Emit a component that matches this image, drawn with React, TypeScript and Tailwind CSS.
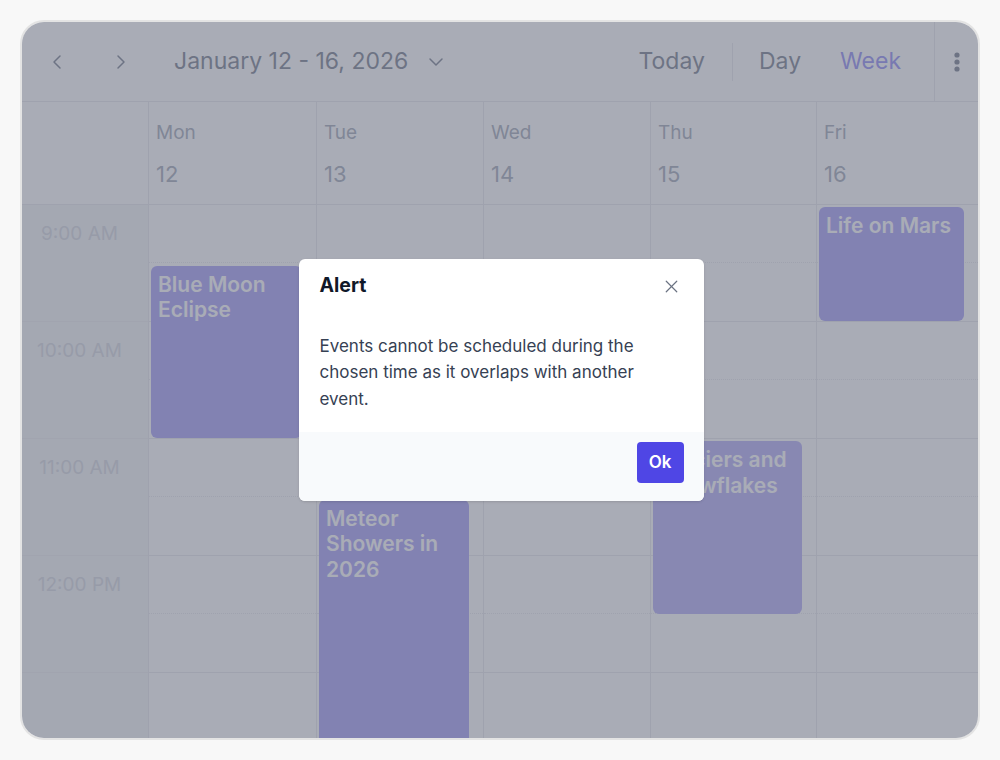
import React from 'react'
import { ChevronLeft, ChevronRight, ChevronDown, X } from 'lucide-react'

// one hour in the grid is 117px tall, the first visible hour is 9:00
const HOUR = 117
const START = 9

interface CalEvent {
  day: number
  title: string
  start: number
  end: number
  color: string
}

const days = [
  { name: 'Mon', date: 12 },
  { name: 'Tue', date: 13 },
  { name: 'Wed', date: 14 },
  { name: 'Thu', date: 15 },
  { name: 'Fri', date: 16 },
]

const hours = ['9:00 AM', '10:00 AM', '11:00 AM', '12:00 PM']

const events: CalEvent[] = [
  { day: 0, title: 'Blue Moon Eclipse', start: 9.5, end: 11, color: 'bg-[#9d96f6]' },
  { day: 1, title: 'Meteor Showers in 2026', start: 11.5, end: 14, color: 'bg-[#9d96f6]' },
  { day: 3, title: 'Glaciers and Snowflakes', start: 11, end: 12.5, color: 'bg-[#aca6f6]' },
  { day: 4, title: 'Life on Mars', start: 9, end: 10, color: 'bg-[#9d96f6]' },
]

const cols = 'grid grid-cols-[126px_168px_167px_167px_166px_minmax(0,1fr)]'

function Toolbar() {
  return (
    <div className="h-20 shrink-0 flex items-stretch border-b border-gray-200">
      <div className="flex items-center flex-1 pl-[15px]">
        <button className="w-10 h-10 flex items-center justify-center text-gray-500">
          <ChevronLeft size={24} strokeWidth={1.5} />
        </button>
        <button className="w-10 h-10 ml-6 flex items-center justify-center text-gray-500">
          <ChevronRight size={24} strokeWidth={1.5} />
        </button>
        <button className="ml-[33px] flex items-center gap-[16px] text-[23px] text-gray-500">
          <span>January 12 - 16, 2026</span>
          <ChevronDown size={24} strokeWidth={1.5} />
        </button>
      </div>
      <div className="flex items-center">
        <span className="text-[23px] text-gray-500 pr-[27px]">Today</span>
        <div className="w-px h-[38px] bg-gray-200" />
        <span className="text-[23px] text-gray-500 pl-[26px]">Day</span>
        <span className="text-[23px] text-[#8480f2] pl-[39px] pr-[33px]">Week</span>
      </div>
      <div className="w-[44px] border-l border-gray-200 flex items-center justify-center text-gray-500">
        <svg width="8" height="24" viewBox="0 0 8 24" fill="currentColor">
          <circle cx="4" cy="5" r="2.6" />
          <circle cx="4" cy="12" r="2.6" />
          <circle cx="4" cy="19" r="2.6" />
        </svg>
      </div>
    </div>
  )
}

function DayHeader() {
  return (
    <div className={`h-[103px] shrink-0 ${cols} border-b border-gray-200`}>
      <div />
      {days.map((d) => (
        <div key={d.name} className="border-l border-gray-200 pl-[7px] pt-[17px] flex flex-col">
          <span className="text-[19px] leading-7 text-gray-400">{d.name}</span>
          <span className="text-[22px] leading-7 mt-[13px] text-gray-400">{d.date}</span>
        </div>
      ))}
    </div>
  )
}

function HourSlots() {
  return (
    <>
      {hours.map((h) => (
        <div key={h} className="h-[117px] border-b border-gray-200">
          <div className="h-[58px] border-b border-dotted border-gray-200" />
        </div>
      ))}
    </>
  )
}

function Grid() {
  return (
    <div className={`flex-1 overflow-hidden ${cols}`}>
      <div className="bg-gray-100">
        {hours.map((h) => (
          <div key={h} className="h-[117px] border-b border-gray-200/70">
            <div className="h-[58px] flex items-center justify-center pr-[11px] text-[19px] text-gray-300">{h}</div>
          </div>
        ))}
      </div>
      {days.map((d, i) => (
        <div key={d.name} className="relative border-l border-gray-200">
          <HourSlots />
          {events
            .filter((e) => e.day === i)
            .map((e) => (
              <div
                key={e.title}
                className={`absolute left-[2px] right-[14px] rounded-md pl-[7px] pr-2 pt-1.5 text-white text-[21px] font-semibold leading-[25.5px] ${e.color}`}
                style={{ top: (e.start - START) * HOUR + 2, height: (e.end - e.start) * HOUR - 3 }}
              >
                {e.title}
              </div>
            ))}
        </div>
      ))}
    </div>
  )
}

function AlertDialog() {
  return (
    <div className="absolute inset-0 flex items-center justify-center pl-[2px]">
      <div className="w-[405px] bg-white rounded-md overflow-hidden shadow-sm">
        <div className="flex items-center justify-between pl-[21px] pr-5 pt-3">
          <span className="text-[19.5px] leading-7 font-bold text-gray-900">Alert</span>
          <button className="w-6 h-6 flex items-center justify-center text-gray-500 mt-1">
            <X size={21} strokeWidth={1.4} />
          </button>
        </div>
        <p className="pl-[21px] pr-5 pt-[34px] pb-5 text-[17px] leading-[26.5px] text-gray-700">
          Events cannot be scheduled during the chosen time as it overlaps with another event.
        </p>
        <div className="bg-slate-50 flex justify-end px-5 pt-2.5 pb-[18px]">
          <button className="h-[41px] px-3 rounded bg-[#4f46e5] text-white font-semibold text-[17px]">Ok</button>
        </div>
      </div>
    </div>
  )
}

export default function App() {
  return (
    <div className="min-h-screen bg-[#f8f8f8] p-5 font-['Inter',sans-serif]">
      <div className="relative h-[720px] rounded-[24px] border-2 border-[#e3e3e3] bg-white overflow-hidden flex flex-col">
        <Toolbar />
        <DayHeader />
        <Grid />
        <div className="absolute inset-0 bg-[rgba(112,117,133,0.6)]" />
        <AlertDialog />
      </div>
    </div>
  )
}
